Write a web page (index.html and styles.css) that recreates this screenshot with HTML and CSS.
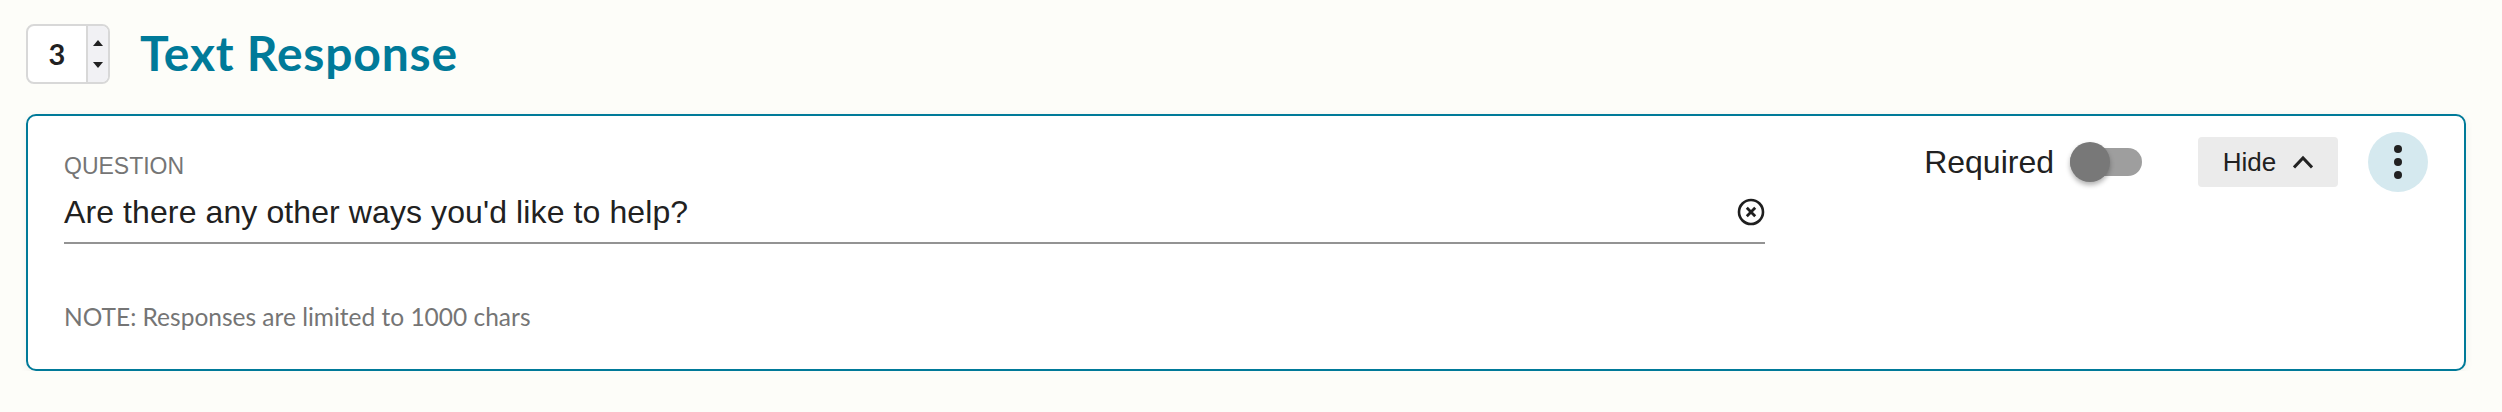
FILE: index.html
```html
<!DOCTYPE html>
<html lang="en">
<head>
  <meta charset="UTF-8">
  <title>Text Response</title>
  <link rel="stylesheet" href="styles.css">
</head>
<body>

<header class="block-header">
  <div class="order-input">
    <span class="order-value">3</span>
    <div class="order-stepper">
      <span class="arrow-up"></span>
      <span class="arrow-down"></span>
    </div>
  </div>
  <h1 class="block-title">Text Response</h1>
</header>

<section class="card">
  <div class="card-main">
    <label class="field-label">QUESTION</label>
    <div class="field-input">
      <span class="field-value">Are there any other ways you'd like to help?</span>
      <svg class="clear-icon" viewBox="0 0 28 28" width="28" height="28">
        <circle cx="14" cy="14" r="12" fill="none" stroke="#1f1f1f" stroke-width="2.6"/>
        <path d="M9.8 9.8l8.4 8.4M18.2 9.8l-8.4 8.4" fill="none" stroke="#1f1f1f" stroke-width="2.8"/>
      </svg>
    </div>
    <p class="note">NOTE: Responses are limited to 1000 chars</p>
  </div>

  <div class="card-actions">
    <span class="required-label">Required</span>
    <div class="toggle">
      <span class="toggle-knob"></span>
    </div>
    <button class="hide-btn">
      Hide
      <svg viewBox="0 0 20 14" width="20" height="14">
        <path d="M1 12.5l9-9.5 9 9.5" fill="none" stroke="#222" stroke-width="3"/>
      </svg>
    </button>
    <button class="more-btn">
      <span class="dot"></span>
      <span class="dot"></span>
      <span class="dot"></span>
    </button>
  </div>
</section>

</body>
</html>
```

FILE: styles.css
```css
:root {
  --teal: #007a99;
  --ink: #212121;
  --muted: #757575;
}
body {
  margin: 0;
  padding: 24px 36px 0 26px;
  background: #fdfdf9;
  color: var(--ink);
  font-family: "Liberation Sans", Arial, sans-serif;
}
.block-header {
  display: flex;
  align-items: center;
  gap: 30px;
  height: 60px;
}
.order-input {
  display: flex;
  box-sizing: border-box;
  width: 84px;
  height: 60px;
  background: white;
  border: 2px solid #d8d8d8;
  border-radius: 8px;
  overflow: hidden;
}
.order-value {
  flex: 1;
  text-align: center;
  line-height: 56px;
  font-family: Lato, sans-serif;
  font-size: 29px;
  font-weight: 700;
}
.order-stepper {
  display: flex;
  flex-direction: column;
  align-items: center;
  justify-content: space-between;
  box-sizing: border-box;
  width: 22px;
  padding: 14px 0;
  background: #f1f1f4;
  border-left: 2px solid #d8d8d8;
}
.arrow-up {
  border: 5px solid transparent;
  border-top: 0;
  border-bottom: 6px solid var(--ink);
}
.arrow-down {
  border: 5px solid transparent;
  border-bottom: 0;
  border-top: 6px solid var(--ink);
}
.block-title {
  margin: -3px 0 0 0;
  color: var(--teal);
  font-family: Lato, sans-serif;
  font-size: 48px;
  font-weight: 700;
  letter-spacing: 0.8px;
}
.card {
  display: flex;
  justify-content: space-between;
  box-sizing: border-box;
  height: 257px;
  margin-top: 30px;
  padding: 16px 36px 0 36px;
  background: white;
  border: 2px solid var(--teal);
  border-radius: 10px;
  box-shadow: 0 2px 8px rgba(0,0,0,0.06);
}
.card-main {
  width: 1701px;
  padding-top: 21px;
}
.field-label {
  display: block;
  color: var(--muted);
  font-size: 23px;
  line-height: 26px;
}
.field-input {
  display: flex;
  align-items: center;
  justify-content: space-between;
  height: 60px;
  padding-top: 3px;
  border-bottom: 2px solid #939393;
}
.field-value {
  font-size: 32px;
  letter-spacing: 0.1px;
}
.note {
  margin: 60px 0 0 0;
  color: var(--muted);
  font-family: Lato, sans-serif;
  font-size: 24.5px;
  line-height: 26px;
}
.card-actions {
  display: flex;
  align-items: center;
  height: 60px;
}
.required-label {
  font-size: 32px;
  margin-right: 16px;
}
.toggle {
  display: flex;
  align-items: center;
  width: 72px;
  height: 28px;
  margin-right: 56px;
  background: #9e9e9e;
  border-radius: 14px;
}
.toggle-knob {
  width: 40px;
  height: 40px;
  background: #787878;
  border-radius: 50%;
  box-shadow: 0 3px 5px rgba(0,0,0,0.3);
}
.hide-btn {
  display: flex;
  align-items: center;
  justify-content: center;
  gap: 17px;
  width: 140px;
  height: 50px;
  margin-right: 30px;
  padding: 0;
  background: #ebebeb;
  border: none;
  border-radius: 4px;
  color: var(--ink);
  font-family: inherit;
  font-size: 26px;
}
.more-btn {
  display: flex;
  flex-direction: column;
  align-items: center;
  justify-content: center;
  gap: 5px;
  width: 60px;
  height: 60px;
  padding: 0;
  background: #d5e9ef;
  border: none;
  border-radius: 50%;
}
.dot {
  width: 8px;
  height: 8px;
  background: var(--ink);
  border-radius: 50%;
}
```
